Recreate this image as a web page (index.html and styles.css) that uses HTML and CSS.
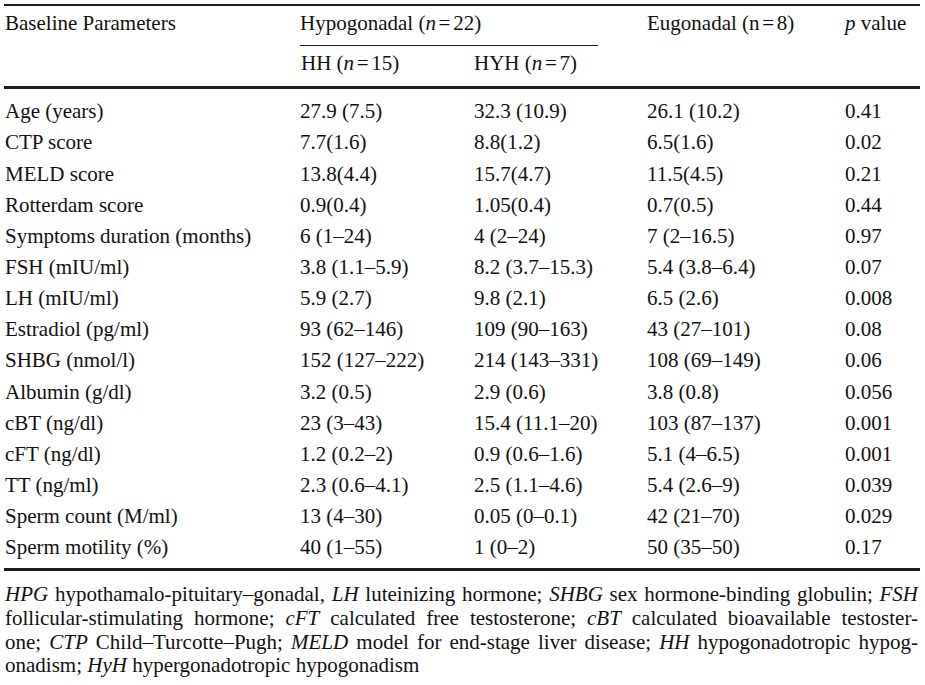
FILE: index.html
```html
<!DOCTYPE html>
<html lang="en">
<head>
<meta charset="utf-8">
<title>Baseline Parameters</title>
<link rel="stylesheet" href="styles.css">
</head>
<body>
<div class="page">
<table class="data">
<colgroup>
<col class="c1"><col class="c2"><col class="c3"><col class="c4"><col class="c5">
</colgroup>
<thead>
<tr class="hr1">
<th rowspan="2" class="span first">Baseline Parameters</th>
<th colspan="2" class="group"><div class="group-label">Hypogonadal (<i>n</i><span class="eq">=</span>22)</div></th>
<th rowspan="2" class="span">Eugonadal (n<span class="eq">=</span>8)</th>
<th rowspan="2" class="span"><i>p</i> value</th>
</tr>
<tr class="hr2">
<th>HH (<i>n</i><span class="eq">=</span>15)</th>
<th>HYH (<i>n</i><span class="eq">=</span>7)</th>
</tr>
</thead>
<tbody>
<tr><td>Age (years)</td><td>27.9 (7.5)</td><td>32.3 (10.9)</td><td>26.1 (10.2)</td><td>0.41</td></tr>
<tr><td>CTP score</td><td>7.7(1.6)</td><td>8.8(1.2)</td><td>6.5(1.6)</td><td>0.02</td></tr>
<tr><td>MELD score</td><td>13.8(4.4)</td><td>15.7(4.7)</td><td>11.5(4.5)</td><td>0.21</td></tr>
<tr><td>Rotterdam score</td><td>0.9(0.4)</td><td>1.05(0.4)</td><td>0.7(0.5)</td><td>0.44</td></tr>
<tr><td>Symptoms duration (months)</td><td>6 (1–24)</td><td>4 (2–24)</td><td>7 (2–16.5)</td><td>0.97</td></tr>
<tr><td>FSH (mIU/ml)</td><td>3.8 (1.1–5.9)</td><td>8.2 (3.7–15.3)</td><td>5.4 (3.8–6.4)</td><td>0.07</td></tr>
<tr><td>LH (mIU/ml)</td><td>5.9 (2.7)</td><td>9.8 (2.1)</td><td>6.5 (2.6)</td><td>0.008</td></tr>
<tr><td>Estradiol (pg/ml)</td><td>93 (62–146)</td><td>109 (90–163)</td><td>43 (27–101)</td><td>0.08</td></tr>
<tr><td>SHBG (nmol/l)</td><td>152 (127–222)</td><td>214 (143–331)</td><td>108 (69–149)</td><td>0.06</td></tr>
<tr><td>Albumin (g/dl)</td><td>3.2 (0.5)</td><td>2.9 (0.6)</td><td>3.8 (0.8)</td><td>0.056</td></tr>
<tr><td>cBT (ng/dl)</td><td>23 (3–43)</td><td>15.4 (11.1–20)</td><td>103 (87–137)</td><td>0.001</td></tr>
<tr><td>cFT (ng/dl)</td><td>1.2 (0.2–2)</td><td>0.9 (0.6–1.6)</td><td>5.1 (4–6.5)</td><td>0.001</td></tr>
<tr><td>TT (ng/ml)</td><td>2.3 (0.6–4.1)</td><td>2.5 (1.1–4.6)</td><td>5.4 (2.6–9)</td><td>0.039</td></tr>
<tr><td>Sperm count (M/ml)</td><td>13 (4–30)</td><td>0.05 (0–0.1)</td><td>42 (21–70)</td><td>0.029</td></tr>
<tr><td>Sperm motility (%)</td><td>40 (1–55)</td><td>1 (0–2)</td><td>50 (35–50)</td><td>0.17</td></tr>
</tbody>
</table>
<div class="notes">
<span class="line"><i>HPG</i> hypothamalo-pituitary–gonadal, <i>LH</i> luteinizing hormone; <i>SHBG</i> sex hormone-binding globulin; <i>FSH</i></span>
<span class="line">follicular-stimulating hormone; <i>cFT</i> calculated free testosterone; <i>cBT</i> calculated bioavailable testoster-</span>
<span class="line">one; <i>CTP</i> Child–Turcotte–Pugh; <i>MELD</i> model for end-stage liver disease; <i>HH</i> hypogonadotropic hypog-</span>
<span class="line last">onadism; <i>HyH</i> hypergonadotropic hypogonadism</span>
</div>
</div>
</body>
</html>
```
FILE: styles.css
```css
html, body {
  margin: 0;
  padding: 0;
  background: #ffffff;
}

body {
  font-family: "Liberation Serif", "Times New Roman", serif;
  font-size: 21px;
  color: #111111;
}

.page {
  padding: 4px 0 0 4px;
  width: 916px;
}

.data {
  width: 916px;
  table-layout: fixed;
  border-collapse: separate;
  border-spacing: 0;
}

.c1 { width: 296px; }
.c2 { width: 174px; }
.c3 { width: 173px; }
.c4 { width: 198px; }
.c5 { width: 75px; }

.data th,
.data td {
  padding: 0;
  text-align: left;
  font-weight: normal;
  line-height: 31.14px;
  vertical-align: top;
  white-space: nowrap;
}

.data th:first-child,
.data td:first-child {
  padding-left: 1px;
}

.eq {
  margin: 0 0.13em;
}

.hr1 th {
  border-top: 2px solid #1e1e1e;
  padding-top: 2.3px;
}

.data th.span {
  border-bottom: 3px solid #1e1e1e;
}

.group-label {
  width: 298px;
  padding-bottom: 5.5px;
  border-bottom: 1px solid #1e1e1e;
}

.hr2 th {
  padding-top: 2.3px;
  padding-bottom: 6.6px;
  border-bottom: 3px solid #1e1e1e;
}

.data tbody tr:first-child td {
  padding-top: 7.3px;
}

.data tbody tr:last-child td {
  padding-bottom: 4.5px;
  border-bottom: 3px solid #1e1e1e;
}

.notes {
  margin-top: 12.4px;
  width: 913px;
  padding-left: 1px;
  line-height: 23.7px;
}

.notes .line {
  display: block;
  text-align: justify;
  text-align-last: justify;
}

.notes .line.last {
  text-align: left;
  text-align-last: left;
}
```
